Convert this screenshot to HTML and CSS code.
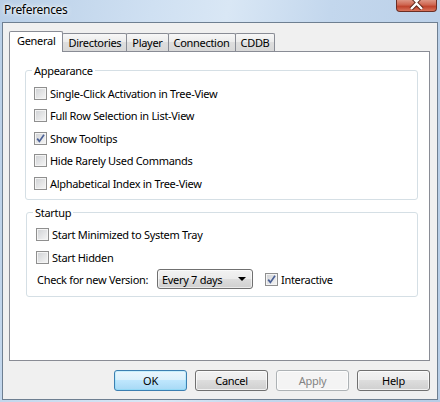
FILE: index.html
```html
<!DOCTYPE html>
<html lang="en">
<head>
    <meta charset="UTF-8">
    <title>Preferences</title>
    <link rel="stylesheet" href="styles.css">
</head>
<body>

    <div class="window">

        <!-- Title bar -->
        <div class="titlebar">
            <span class="title">Preferences</span>
            <div class="close-btn">
                <svg width="17" height="10" viewBox="0 0 17 10">
                    <path d="M3 -4 L8.5 1.5 L14 -4 M3 9 L8.5 3.5 L14 9" stroke="#5a2418" stroke-width="4.2" fill="none"/>
                    <path d="M3 -4 L8.5 1.5 L14 -4 M3 9 L8.5 3.5 L14 9" stroke="#ffffff" stroke-width="2.4" fill="none"/>
                </svg>
            </div>
        </div>

        <div class="client">

            <!-- Tabs -->
            <div class="tabs">
                <div class="tab active">General</div>
                <div class="tab">Directories</div>
                <div class="tab">Player</div>
                <div class="tab">Connection</div>
                <div class="tab">CDDB</div>
            </div>

            <div class="panel">

                <div class="group appearance">
                    <div class="group-title">Appearance</div>
                    <div class="rows">
                        <div class="check-row"><span class="checkbox"></span>Single-Click Activation in Tree-View</div>
                        <div class="check-row"><span class="checkbox"></span>Full Row Selection in List-View</div>
                        <div class="check-row">
                            <span class="checkbox">
                                <svg width="11" height="11" viewBox="0 0 11 11"><path d="M2.2 5.6 L4.4 8.4 L9 1.8" stroke="#4b6196" stroke-width="1.7" fill="none"/></svg>
                            </span>Show Tooltips
                        </div>
                        <div class="check-row"><span class="checkbox"></span>Hide Rarely Used Commands</div>
                        <div class="check-row"><span class="checkbox"></span>Alphabetical Index in Tree-View</div>
                    </div>
                </div>

                <div class="group startup">
                    <div class="group-title">Startup</div>
                    <div class="rows">
                        <div class="check-row tall"><span class="checkbox"></span>Start Minimized to System Tray</div>
                        <div class="check-row tall"><span class="checkbox"></span>Start Hidden</div>
                        <div class="version-row">
                            <span class="version-label">Check for new Version:</span>
                            <div class="dropdown">
                                <span>Every 7 days</span>
                                <span class="arrow"></span>
                            </div>
                            <div class="check-row inline">
                                <span class="checkbox">
                                    <svg width="11" height="11" viewBox="0 0 11 11"><path d="M2.2 5.6 L4.4 8.4 L9 1.8" stroke="#4b6196" stroke-width="1.7" fill="none"/></svg>
                                </span>Interactive
                            </div>
                        </div>
                    </div>
                </div>

            </div>

            <!-- Dialog buttons -->
            <div class="buttons">
                <button class="btn default">OK</button>
                <button class="btn">Cancel</button>
                <button class="btn disabled">Apply</button>
                <button class="btn">Help</button>
            </div>

        </div>
    </div>

</body>
</html>
```

FILE: styles.css
```css
body {
    margin: 0;
    font-family: "Noto Sans", "Open Sans", sans-serif;
    font-size: 11px;
    letter-spacing: -0.3px;
    color: #000000;
}

/* Aero frame */
.window {
    width: 440px;
    height: 402px;
    background: linear-gradient(100deg, #b9cfe7 0%, #cfe0f2 30%, #d9e7f5 45%, #c3d7ed 65%, #b7cde6 100%);
    display: flex;
    flex-direction: column;
}

.titlebar {
    height: 22px;
    display: flex;
    justify-content: space-between;
    align-items: flex-start;
    padding-left: 4px;
}

.title {
    margin-top: 2px;
    line-height: 15px;
    font-size: 12px;
    text-shadow: 0 0 6px #ffffff, 0 0 3px #ffffff;
}

.close-btn {
    width: 41px;
    height: 12px;
    margin-right: 3px;
    box-sizing: border-box;
    border: 1px solid #6b2e24;
    border-top: none;
    border-radius: 0 0 4px 4px;
    background: linear-gradient(#dd9584 0%, #d06a55 40%, #c0442d 60%, #d8745c 100%);
    display: flex;
    justify-content: center;
    align-items: flex-start;
}

/* Dialog client area */
.client {
    margin: 0 2px;
    height: 378px;
    box-sizing: border-box;
    border: 1px solid #6e7f91;
    background-color: #f0f0f0;
    padding: 8px 7px 0 6px;
}

/* Tabs */
.tabs {
    display: flex;
    align-items: flex-end;
    height: 21px;
}

.tab {
    position: relative;
    height: 18px;
    margin-bottom: 1px;
    margin-left: -1px;
    padding: 0 5px;
    box-sizing: border-box;
    border: 1px solid #898c95;
    border-bottom: none;
    border-radius: 2px 2px 0 0;
    background: linear-gradient(#f7f7f7, #ebebeb 50%, #dedede 50%, #d8d8d8);
    line-height: 17px;
}

.tab.active {
    z-index: 1;
    height: 21px;
    margin: 0;
    padding: 0 7px;
    background: #ffffff;
    line-height: 18px;
}

.panel {
    position: relative;
    height: 310px;
    margin-top: -1px;
    box-sizing: border-box;
    border: 1px solid #898c95;
    background-color: #ffffff;
    padding-top: 18px;
}

/* Group boxes */
.group {
    border: 1px solid #d5dfe5;
    border-radius: 3px;
    margin: 0 11px 0 15px;
}

.group-title {
    width: max-content;
    margin: -8px 0 0 6px;
    padding: 0 2px;
    line-height: 15px;
    background-color: #ffffff;
}

.appearance .rows {
    padding: 4px 0 4px 8px;
}

.startup {
    margin-top: 12px;
    margin-left: 16px;
}

.startup .rows {
    padding: 3px 0 6px 9px;
}

.check-row {
    display: flex;
    align-items: center;
    height: 22.5px;
}

.check-row.tall {
    height: 23px;
}

.checkbox {
    width: 13px;
    height: 13px;
    box-sizing: border-box;
    margin-right: 3px;
    border: 1px solid #8f8f8f;
    background: linear-gradient(135deg, #cfd1d4, #f6f6f6);
    box-shadow: inset 0 0 0 1px #f4f4f4;
    display: flex;
}

/* Version row */
.version-row {
    display: flex;
    align-items: center;
    height: 21px;
    margin-left: 1px;
}

.version-label {
    width: 120px;
}

.dropdown {
    width: 96px;
    height: 20px;
    box-sizing: border-box;
    border: 1px solid #707070;
    border-radius: 3px;
    background: linear-gradient(#f2f2f2, #ebebeb 50%, #dddddd 50%, #cfcfcf);
    box-shadow: inset 0 0 0 1px rgba(255, 255, 255, 0.6);
    display: flex;
    align-items: center;
    justify-content: space-between;
    padding: 0 6px 0 4px;
}

.arrow {
    width: 0;
    height: 0;
    border-left: 4px solid transparent;
    border-right: 4px solid transparent;
    border-top: 4px solid #000000;
}

.check-row.inline {
    margin-left: 12px;
    height: 21px;
}

/* Buttons */
.buttons {
    display: flex;
    justify-content: flex-end;
    gap: 8px;
    margin-top: 9px;
}

.btn {
    width: 73px;
    height: 21px;
    border: 1px solid #707070;
    border-radius: 3px;
    background: linear-gradient(#f2f2f2, #ebebeb 50%, #dddddd 50%, #cfcfcf);
    box-shadow: inset 0 0 0 1px rgba(255, 255, 255, 0.7);
    font-family: "Noto Sans", "Open Sans", sans-serif;
    font-size: 11px;
    letter-spacing: -0.3px;
    color: #000000;
    padding: 0;
}

.btn.default {
    border-color: #3c7fb1;
    background: linear-gradient(#eaf6fd, #d9f0fc 50%, #bee6fd 50%, #a7d9f5);
    box-shadow: inset 0 0 0 1px #48d6fb33;
}

.btn.disabled {
    border-color: #adb2b5;
    background: #f4f4f4;
    color: #838383;
}
```
